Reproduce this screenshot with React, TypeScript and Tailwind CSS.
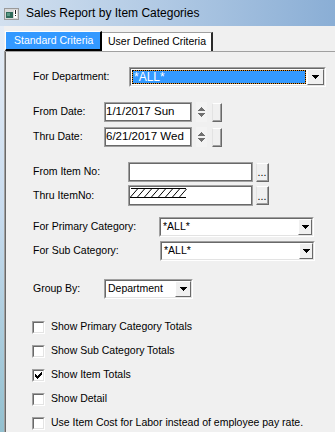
import React from "react";

const Tri = ({ color = "#000" }: { color?: string }) => (
  <svg width="7" height="4" viewBox="0 0 7 4" shapeRendering="crispEdges">
    <rect x="0" y="0" width="7" height="1" fill={color} />
    <rect x="1" y="1" width="5" height="1" fill={color} />
    <rect x="2" y="2" width="3" height="1" fill={color} />
    <rect x="3" y="3" width="1" height="1" fill={color} />
  </svg>
);

const TriUp = ({ color = "#000" }: { color?: string }) => (
  <svg width="7" height="4" viewBox="0 0 7 4" shapeRendering="crispEdges">
    <rect x="3" y="0" width="1" height="1" fill={color} />
    <rect x="2" y="1" width="3" height="1" fill={color} />
    <rect x="1" y="2" width="5" height="1" fill={color} />
    <rect x="0" y="3" width="7" height="1" fill={color} />
  </svg>
);

const DropBtn = ({ w = "w-[16px]" }: { w?: string }) => (
  <div
    className={`flex h-full ${w} shrink-0 items-center justify-center border border-t-white border-l-white border-r-[#696969] border-b-[#696969] bg-[#f0f0f0]`}
  >
    <Tri />
  </div>
);

function Combo({
  cls,
  text,
  focused,
  btnW,
}: {
  cls: string;
  text: string;
  focused?: boolean;
  btnW?: string;
}) {
  return (
    <div
      className={`flex h-[20px] ${cls} border border-t-[#a0a0a0] border-l-[#a0a0a0] border-r-white border-b-white`}
    >
      <div className="flex flex-1 border border-t-[#696969] border-l-[#696969] border-r-[#e3e3e3] border-b-[#e3e3e3] bg-white">
        {focused ? (
          <div className="flex flex-1 bg-white p-[1px]">
            <div className="flex flex-1 bg-[#e0902a]">
              <div className="flex flex-1 items-center border border-dotted border-black bg-[#3399ff] bg-clip-padding pl-[1px] text-[12px] text-white">
                {text}
              </div>
            </div>
          </div>
        ) : (
          <div className="flex flex-1 items-center pl-[2px]">{text}</div>
        )}
        <DropBtn w={btnW} />
      </div>
    </div>
  );
}

function TextBox({ cls, children, h = "h-[20px]" }: { cls: string; children?: React.ReactNode; h?: string }) {
  return (
    <div className={`${h} ${cls} border border-[#a0a0a0]`}>
      <div className="flex h-full w-full items-center border border-[#696969] bg-white">{children}</div>
    </div>
  );
}

function RaisedBtn({ cls, children }: { cls: string; children?: React.ReactNode }) {
  return (
    <div
      className={`${cls} border border-t-white border-l-[#e3e3e3] border-r-[#696969] border-b-[#696969] bg-[#f0f0f0]`}
    >
      <div className="flex h-full w-full items-end justify-center border-r border-b border-[#a0a0a0] pb-[2px] leading-none">
        {children}
      </div>
    </div>
  );
}

function Spinner() {
  return (
    <div className="ml-[4px] flex h-[20px] w-[11px] flex-col items-center justify-between bg-[#f3f3f3] py-[5px]">
      <TriUp color="#707070" />
      <Tri color="#707070" />
    </div>
  );
}

function Check({ checked, label }: { checked?: boolean; label: string }) {
  return (
    <div className="flex h-[24px] items-center">
      <div className="-ml-[1px] h-[13px] w-[13px] border border-t-[#a0a0a0] border-l-[#a0a0a0] border-r-white border-b-white">
        <div className="flex h-full w-full items-center justify-center border border-t-[#696969] border-l-[#696969] border-r-[#e3e3e3] border-b-[#e3e3e3] bg-white">
          {checked && (
            <svg width="7" height="7" viewBox="0 0 7 7" shapeRendering="crispEdges">
              <rect x="0" y="2" width="1" height="3" fill="#000" />
              <rect x="1" y="3" width="1" height="3" fill="#000" />
              <rect x="2" y="4" width="1" height="3" fill="#000" />
              <rect x="3" y="3" width="1" height="3" fill="#000" />
              <rect x="4" y="2" width="1" height="3" fill="#000" />
              <rect x="5" y="1" width="1" height="3" fill="#000" />
              <rect x="6" y="0" width="1" height="3" fill="#000" />
            </svg>
          )}
        </div>
      </div>
      <span className="ml-[6px]">{label}</span>
    </div>
  );
}

export default function App() {
  return (
    <div className="flex h-[432px] w-[335px] flex-col overflow-hidden bg-[#f0f0f0] font-['Liberation_Sans',Arial,sans-serif] text-[10.5px] text-black">
      {/* Title bar */}
      <div className="flex h-[26px] shrink-0 items-center bg-[linear-gradient(to_right,#d2e0ef,#b3cbe5_45%,#8aaed5)]">
        <div className="ml-[4px] mt-[2px]">
          <svg width="15" height="12" viewBox="0 0 15 12" shapeRendering="crispEdges">
            <rect x="0" y="0" width="15" height="12" fill="#9a9a9a" />
            <rect x="1" y="1" width="13" height="10" fill="#d8d8d8" />
            <rect x="2" y="4" width="7" height="6" fill="#2f6a5a" />
            <rect x="3" y="5" width="3" height="3" fill="#5b9a86" />
            <rect x="10" y="2" width="3" height="8" fill="#ffffff" />
            <rect x="11" y="2" width="1" height="4" fill="#202020" />
            <rect x="11" y="7" width="1" height="1" fill="#202020" />
          </svg>
        </div>
        <span className="ml-[7px] text-[12px] leading-none">Sales Report by Item Categories</span>
      </div>

      <div className="flex min-h-0 flex-1">
        <div className="w-[4px] shrink-0 bg-[linear-gradient(to_bottom,#e6edf6,#c9dcef_45%,#93c0cf)]" />
        <div className="flex min-w-0 flex-1 flex-col">
          {/* Tabs */}
          <div className="flex h-[25px] shrink-0 items-end pl-[1px]">
            <div className="flex h-[20px] w-[97px] items-center border-t border-l border-t-white border-l-white border-r-2 border-b-2 border-r-black border-b-black bg-[#3399ff] pl-[8px] text-white">
              Standard Criteria
            </div>
            <div className="flex h-[19px] w-[111px] items-center border-t border-t-[#a0a0a0] border-r-2 border-r-[#2a2a2a] bg-white pl-[6px]">
              User Defined Criteria
            </div>
          </div>

          {/* Panel */}
          <div className="flex-1 border-t border-l border-[#a0a0a0]">
            <div className="flex h-full flex-col border-l border-[#696969] pl-[27px]">
              {/* Department */}
              <div className="mt-[15px] flex items-center">
                <span className="w-[96px]">For Department:</span>
                <Combo cls="w-[197px]" text="*ALL*" focused btnW="w-[17px]" />
              </div>

              {/* Dates */}
              <div className="mt-[15px] flex items-center">
                <span className="w-[71px]">From Date:</span>
                <TextBox cls="w-[88px]">
                  <span className="text-[11.5px]">1/1/2017 Sun</span>
                </TextBox>
                <Spinner />
                <RaisedBtn cls="ml-[5px] h-[19px] w-[10px]" />
              </div>
              <div className="mt-[5px] flex items-center">
                <span className="w-[71px]">Thru Date:</span>
                <TextBox cls="w-[88px]">
                  <span className="text-[11.5px]">6/21/2017 Wed</span>
                </TextBox>
                <Spinner />
                <RaisedBtn cls="ml-[5px] h-[19px] w-[10px]" />
              </div>

              {/* Item No */}
              <div className="mt-[15px] flex items-center">
                <span className="w-[95px]">From Item No:</span>
                <TextBox cls="w-[125px]" />
                <RaisedBtn cls="ml-[3px] h-[19px] w-[13px]">...</RaisedBtn>
              </div>
              <div className="mt-[3px] flex items-center">
                <span className="w-[95px]">Thru ItemNo:</span>
                <TextBox cls="w-[125px]" h="h-[21px]">
                  <svg width="57" height="11" viewBox="0 0 57 11" className="mb-[4px] ml-[0px]" shapeRendering="crispEdges">
                    <rect x="1" y="0" width="55" height="1" fill="#000" />
                    <rect x="0" y="9" width="56" height="1" fill="#000" />
                    <g stroke="#000" strokeWidth="1" fill="none" shapeRendering="auto">
                      <line x1="0.5" y1="9" x2="7.5" y2="1" />
                      <line x1="7.5" y1="9" x2="14.5" y2="1" />
                      <line x1="14.5" y1="9" x2="21.5" y2="1" />
                      <line x1="21.5" y1="9" x2="28.5" y2="1" />
                      <line x1="28.5" y1="9" x2="35.5" y2="1" />
                      <line x1="35.5" y1="9" x2="42.5" y2="1" />
                      <line x1="42.5" y1="9" x2="49.5" y2="1" />
                      <line x1="49.5" y1="9" x2="56.5" y2="1" />
                    </g>
                  </svg>
                </TextBox>
                <RaisedBtn cls="ml-[3px] h-[19px] w-[13px]">...</RaisedBtn>
              </div>

              {/* Categories */}
              <div className="mt-[11px] flex items-center">
                <span className="w-[126px]">For Primary Category:</span>
                <Combo cls="w-[155px]" text="*ALL*" btnW="w-[14px]" />
              </div>
              <div className="mt-[4px] flex items-center">
                <span className="w-[127px]">For Sub Category:</span>
                <Combo cls="w-[155px]" text="*ALL*" btnW="w-[14px]" />
              </div>

              {/* Group By */}
              <div className="mt-[18px] flex items-center">
                <span className="w-[71px]">Group By:</span>
                <Combo cls="w-[89px]" text="Department" btnW="w-[16px]" />
              </div>

              {/* Checkboxes */}
              <div className="mt-[16px] flex flex-col">
                <Check label="Show Primary Category Totals" />
                <Check label="Show Sub Category Totals" />
                <Check checked label="Show Item Totals" />
                <Check label="Show Detail" />
                <Check label="Use Item Cost for Labor instead of employee pay rate." />
              </div>
            </div>
          </div>
        </div>
      </div>
    </div>
  );
}
